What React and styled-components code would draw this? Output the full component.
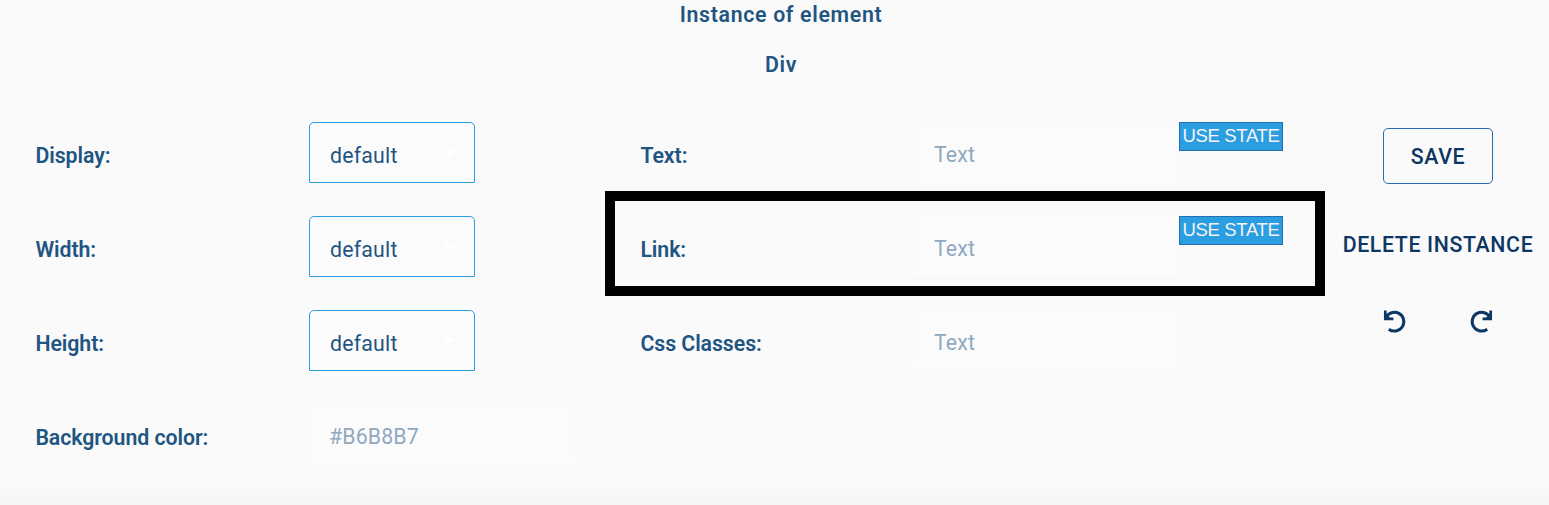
import React from "react";
import styled, { createGlobalStyle } from "styled-components";

const GlobalStyle = createGlobalStyle`
  *, *::before, *::after { box-sizing: border-box; }
  body { margin: 0; background: #fafafa; font-family: Roboto, sans-serif; overflow: hidden; }
  button, input { font-family: inherit; margin: 0; }
`;

const Panel = styled.main`
  height: 505px;
  background: linear-gradient(#fafafa 482px, #f5f5f5 505px);
  color: #1f5582;
`;

const Header = styled.header`
  display: flex;
  flex-direction: column;
  align-items: center;
  padding-left: 13px;
`;

const Title = styled.h1`
  margin: 0 0 20px;
  font-size: 21.3px;
  font-weight: 600;
  line-height: 30px;
  letter-spacing: 0.68px;
`;

const Columns = styled.div`
  display: grid;
  grid-template-columns: 605px 720px 224px;
  padding-top: 22px;
`;

const Fields = styled.div`
  display: flex;
  flex-direction: column;
  gap: 33px;
`;

const Field = styled.div`
  position: relative;
  display: flex;
  align-items: flex-start;
  height: 61px;
  padding-left: 35.4px;

  &::after {
    content: "";
    display: ${(p) => (p.$highlighted ? "block" : "none")};
    position: absolute;
    inset: -25px 0 -19px 0;
    border: 10px solid #000;
    pointer-events: none;
  }
`;

const Label = styled.label`
  width: 273.6px;
  line-height: 67px;
  font-size: 21.3px;
  font-weight: 600;
  letter-spacing: -0.06px;
`;

const Select = styled.button`
  display: flex;
  justify-content: space-between;
  align-items: center;
  width: 166px;
  height: 61px;
  padding: 5px 18px 0 20px;
  border: 1px solid #2b9ee2;
  border-radius: 5px 5px 0 0;
  background: #fbfbfb;
  color: #1f5582;
  font-size: 21.3px;
  letter-spacing: 0.2px;
`;

const Caret = styled.span`
  margin-bottom: 4px;
  border: 7px solid transparent;
  border-top-color: #fff;
  border-bottom-width: 0;
`;

const Input = styled.input`
  width: 265px;
  height: 58px;
  padding: 8px 20px 0;
  border: 0;
  border-bottom: 1px solid #fff;
  border-radius: 5px 5px 0 0;
  background: #fbfbfb;
  font-size: 21.3px;
  letter-spacing: 0.15px;

  &::placeholder { color: #8fa9c1; opacity: 1; }
`;

const StateButton = styled.button`
  width: 104px;
  height: 29px;
  padding: 0 0 1px;
  border: 1px solid #246fb2;
  background: #2b9ee2;
  color: #f3f3f3;
  font: 18.5px/26px "Liberation Sans", Arial, sans-serif;
  letter-spacing: -0.35px;
  white-space: nowrap;
`;

const Actions = styled.aside`
  display: flex;
  flex-direction: column;
  align-items: center;
  gap: 32px;
  padding: 6px 0 0 2px;
`;

const ActionButton = styled.button`
  width: ${(p) => (p.$outlined ? "110px" : "202px")};
  height: 56px;
  padding: 1px 0 0;
  border: ${(p) => (p.$outlined ? "1px solid #2470b4" : "0")};
  border-radius: 5px;
  background: transparent;
  color: #0c3764;
  font-size: 21.3px;
  font-weight: 500;
  letter-spacing: 0.63px;
  white-space: nowrap;
`;

const History = styled.div`
  display: flex;
  gap: 56px;
  margin-top: 2px;
`;

const IconButton = styled.button`
  display: flex;
  padding: 0;
  border: 0;
  background: transparent;
  color: #0c3764;
`;

const ArrowIcon = styled.svg`
  width: 30px;
  height: 30px;
  transform: ${(p) => (p.$mirrored ? "scaleX(-1)" : "none")};
`;

const RotateIcon = ({ mirrored }) => (
  <ArrowIcon $mirrored={mirrored} viewBox="0 0 30 30" fill="none" stroke="currentColor" strokeWidth="3">
    <path d="M5.9 11.7A9.4 9.4 0 1 1 8.8 23.2" />
    <path d="M5.3 4.5V12.9H13.4" strokeWidth="2.7" />
    <path d="M5.3 6.5L11 12.9H5.3Z" fill="currentColor" stroke="none" />
  </ArrowIcon>
);

const SelectField = ({ label }) => (
  <Field>
    <Label>{label}</Label>
    <Select>default<Caret /></Select>
  </Field>
);

const InputField = ({ label, placeholder = "Text", state, highlighted }) => (
  <Field $highlighted={highlighted}>
    <Label>{label}</Label>
    <Input placeholder={placeholder} />
    {state && <StateButton>USE STATE</StateButton>}
  </Field>
);

export default function App() {
  return (
    <Panel>
      <GlobalStyle />
      <Header>
        <Title>Instance of element</Title>
        <Title as="h2">Div</Title>
      </Header>
      <Columns>
        <Fields>
          <SelectField label="Display:" />
          <SelectField label="Width:" />
          <SelectField label="Height:" />
          <InputField label="Background color:" placeholder="#B6B8B7" />
        </Fields>
        <Fields>
          <InputField label="Text:" state />
          <InputField label="Link:" state highlighted />
          <InputField label="Css Classes:" />
        </Fields>
        <Actions>
          <ActionButton $outlined>SAVE</ActionButton>
          <ActionButton>DELETE INSTANCE</ActionButton>
          <History>
            <IconButton aria-label="Undo"><RotateIcon /></IconButton>
            <IconButton aria-label="Redo"><RotateIcon mirrored /></IconButton>
          </History>
        </Actions>
      </Columns>
    </Panel>
  );
}
